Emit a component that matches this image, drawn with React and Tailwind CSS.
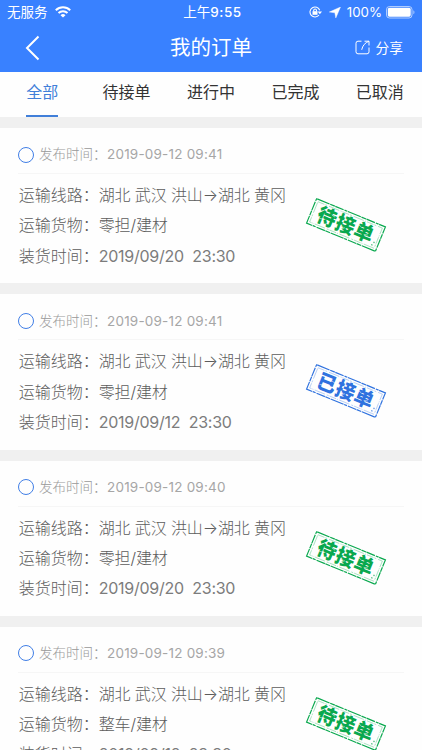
import { clsx } from "clsx";

const tabs = ["全部", "待接单", "进行中", "已完成", "已取消"];

const orders = [
  { id: 1, publishedAt: "2019-09-12 09:41", cargo: "零担/建材", loadDate: "2019/09/20", status: "待接单" },
  { id: 2, publishedAt: "2019-09-12 09:41", cargo: "零担/建材", loadDate: "2019/09/12", status: "已接单" },
  { id: 3, publishedAt: "2019-09-12 09:40", cargo: "零担/建材", loadDate: "2019/09/20", status: "待接单" },
  { id: 4, publishedAt: "2019-09-12 09:39", cargo: "整车/建材", loadDate: "2019/09/12", status: "待接单" }
];

const StatusBar = () => (
  <div className="grid h-6 grid-cols-3 items-center pl-[7px] pr-[7px] text-[13.5px] leading-6">
    <div className="flex items-center gap-[7px]">
      <span>无服务</span>
      <svg width="16" height="12" viewBox="0 0 16 12" fill="none" stroke="white" strokeWidth="2">
        <path d="M.8 4.3a10.3 10.3 0 0 1 14.4 0" />
        <path d="M3.5 7a6.5 6.5 0 0 1 9 0" />
        <path d="M8 11.6 5.5 9.2a3.6 3.6 0 0 1 5 0z" fill="white" stroke="none" />
      </svg>
    </div>
    <div className="whitespace-nowrap pl-[3px] text-center">
      上午<span className="font-medium tracking-[0.5px]">9:55</span>
    </div>
    <div className="flex items-center justify-end whitespace-nowrap">
      <svg width="13" height="12" viewBox="0 0 13 12" fill="none" stroke="white" strokeWidth="1.1">
        <path d="M10.7 4.3A5 5 0 1 0 10 9" />
        <path d="m8.7 5.6 2.1 2.6L13 5.6z" fill="white" stroke="none" />
        <rect x="3.5" y="5.2" width="5" height="3.6" fill="white" stroke="none" />
        <path d="M4.7 5.6V4.4a1.4 1.4 0 0 1 2.8 0v1.2" />
      </svg>
      <svg className="ml-[7px]" width="12" height="11" viewBox="0 0 12 11" fill="white">
        <path d="M11.5 0 6.8 11l-1-5.2L.3 5z" stroke="white" strokeWidth=".4" />
      </svg>
      <span className="ml-[6px] text-[13.3px]">100%</span>
      <svg className="ml-1" width="29" height="13" viewBox="0 0 29 13">
        <rect x=".5" y=".5" width="25.5" height="11.5" rx="3" fill="none" stroke="white" strokeOpacity=".6" />
        <rect x="1.8" y="1.8" width="22.9" height="8.9" rx="1.6" fill="white" />
        <path d="M27.4 4.3c1.4.5 1.4 3.4 0 3.9z" fill="white" fillOpacity=".6" />
      </svg>
    </div>
  </div>
);

const NavBar = () => (
  <div className="grid h-12 grid-cols-[1fr_auto_1fr] items-center pl-[25px] pr-[25px]">
    <svg width="15" height="26" viewBox="0 0 15 26" fill="none" stroke="white" strokeWidth="2">
      <path d="M13.5 1.5 2 13l11.5 11.5" />
    </svg>
    <h1 className="whitespace-nowrap text-center text-[20.5px] leading-6">我的订单</h1>
    <button type="button" className="-mr-[6px] flex items-center justify-end gap-[6px] pb-px text-[13.7px] leading-6">
      <svg width="15" height="15" viewBox="0 0 15 15" fill="none" stroke="white" strokeWidth="1">
        <path d="M6.5 1.2H3A2 2 0 0 0 1 3.2v8.6a2 2 0 0 0 2 2h9a2 2 0 0 0 2-2V7.5" />
        <path d="M9.5 1.2H14v4.3M14 1.2c-3.8 1.4-6.5 4.4-7.3 8.6" />
      </svg>
      分享
    </button>
  </div>
);

const Stamp = ({ status }) => (
  <svg
    className={clsx("absolute left-[304px] top-[68px]", status === "待接单" ? "text-[#09a84e]" : "text-[#2f72df]")}
    width="84"
    height="58"
    viewBox="0 0 84 58"
  >
    <g transform="translate(42 29) rotate(22.3)" fill="none" stroke="currentColor">
      <rect x="-37.2" y="-13.2" width="74.4" height="26.4" strokeWidth="1.2" strokeDasharray="14 .7 5 .5 9 1 3 .6" />
      <rect x="-34.8" y="-10.9" width="69.6" height="21.8" strokeWidth=".6" strokeOpacity=".5" strokeDasharray="7 1 2 2 11 1.5 1 1" />
      <text
        x="-.3"
        y="6.9"
        transform="scale(1 1.06)"
        textAnchor="middle"
        fill="currentColor"
        stroke="none"
        className="text-[19.3px] font-black tracking-[0.7px]"
      >
        {status}
      </text>
      <path d="M-27 4l4-1M-17-4l4 1M-4 6l4-3M12-5l3 1M20 2l4-1" stroke="white" strokeWidth=".5" />
      <path d="M31 8l1 1M32 5l1 1" strokeWidth=".9" />
    </g>
  </svg>
);

const OrderCard = ({ order }) => (
  <article className="relative h-[155.3px] shrink-0 bg-[#fefefe] px-[18px] pt-[8px]">
    <div className="flex h-[38px] items-center border-b border-[#f6f6f6] text-[13.5px] font-light text-[#999]">
      <span className="mr-[5px] size-4 rounded-full border-[1.3px] border-[#417fe6]" />
      <span>发布时间：</span>
      <span className="ml-[0.5px] font-normal tracking-[0.2px] text-[#a6a6a6]">{order.publishedAt}</span>
    </div>
    <div className="whitespace-pre pl-[0.7px] pt-[6px] text-[16px] font-light leading-[30.3px] text-[#5c5c5c]">
      <p>运输线路：<span className="tracking-[-0.12px]">湖北 武汉 洪山→湖北 黄冈</span></p>
      <p>运输货物：<span className="tracking-[-0.1px]">{order.cargo}</span></p>
      <p>装货时间：<span className="font-normal tracking-[-0.26px] text-[#7c7c7c]">{order.loadDate}  23:30</span></p>
    </div>
    <Stamp status={order.status} />
  </article>
);

export default function App() {
  return (
    <main className="flex h-[750px] flex-col overflow-hidden bg-[#f0f0f0] font-['Inter','Noto_Sans_CJK_SC',sans-serif]">
      <header className="h-[72px] shrink-0 bg-[#3981ff] text-white">
        <StatusBar />
        <NavBar />
      </header>
      <nav className="grid h-[45px] shrink-0 grid-cols-5 bg-[#fefefe] text-[16px] text-[#333]">
        {tabs.map((tab, index) => (
          <div key={tab} className="flex justify-center">
            <span
              className={clsx(
                "whitespace-nowrap leading-[40px]",
                index === 0 && "border-b-2 border-[#417fd9] text-[#417fd9]"
              )}
            >
              {tab}
            </span>
          </div>
        ))}
      </nav>
      <section className="flex flex-col gap-[11px] pt-[11px]">
        {orders.map((order) => (
          <OrderCard key={order.id} order={order} />
        ))}
      </section>
    </main>
  );
}
